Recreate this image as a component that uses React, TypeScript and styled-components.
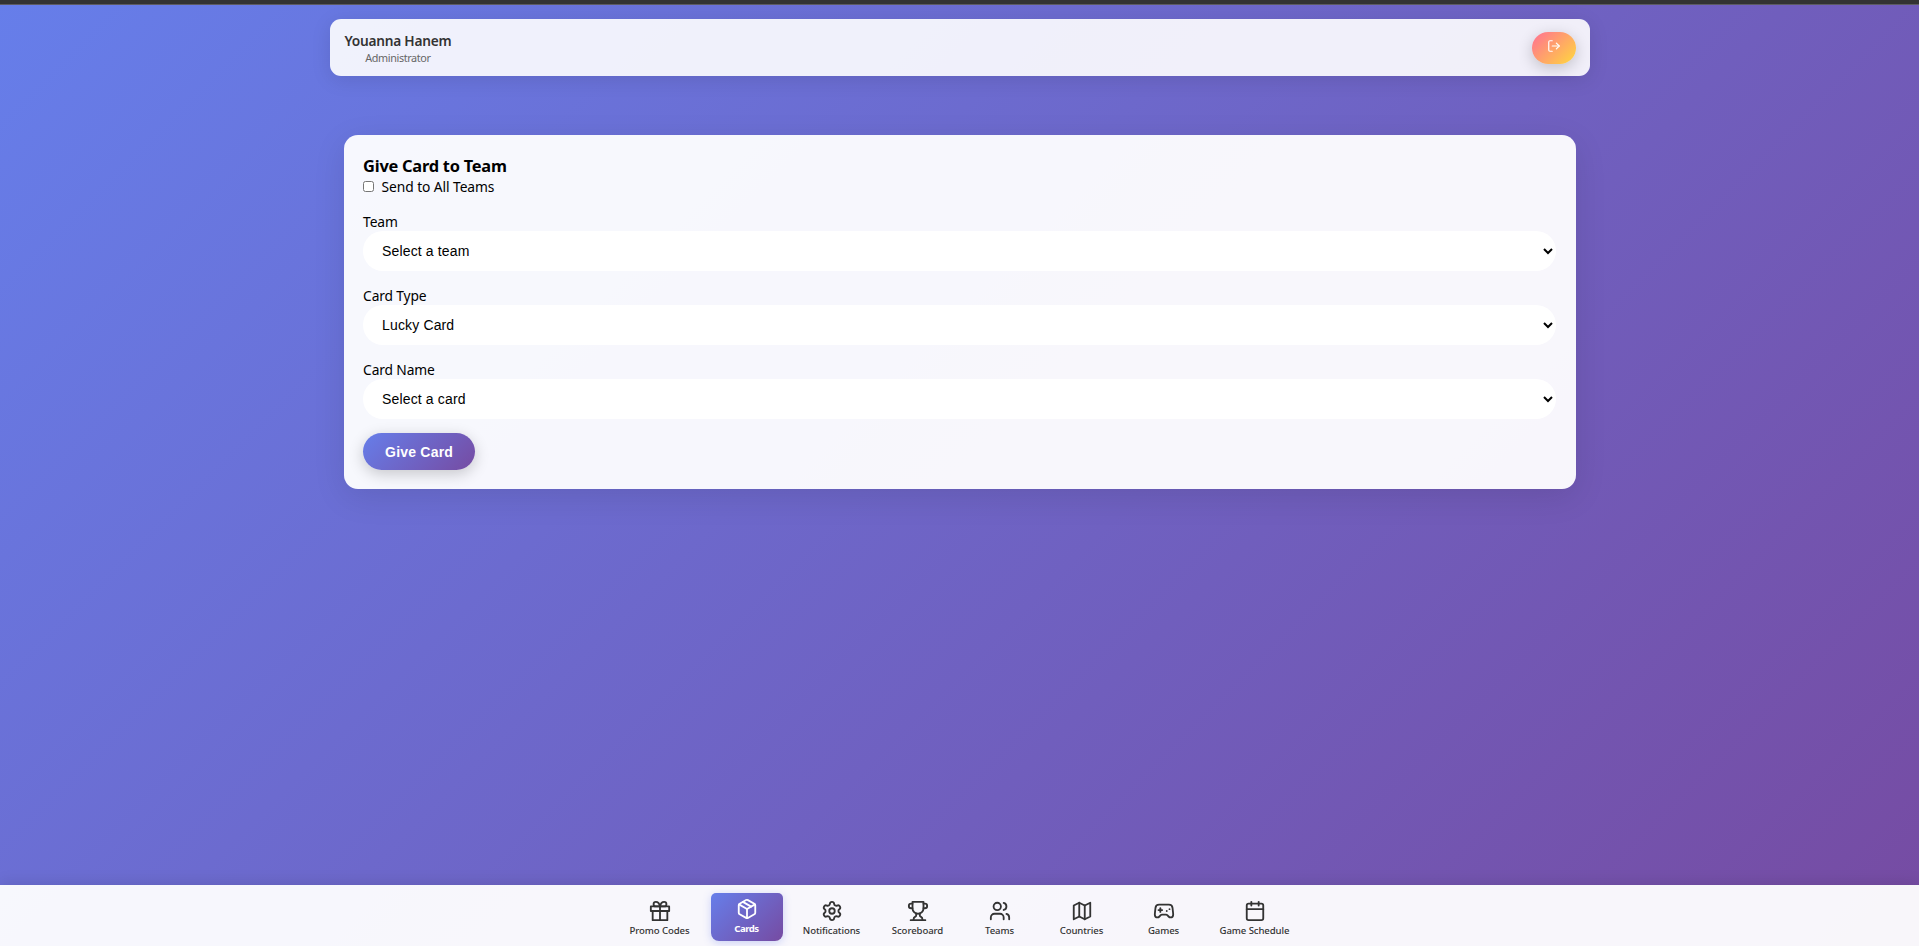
import React from "react";
import styled, { createGlobalStyle, css } from "styled-components";
import { Package, Settings, Users, Gamepad2, Calendar, LogOut } from "lucide-react";
import { FiGift } from "react-icons/fi";

const GlobalStyle = createGlobalStyle`
  * { box-sizing: border-box; margin: 0; padding: 0; }
  body { font-family: "Noto Sans", "Open Sans", sans-serif; font-size: 14px; color: #000; overflow: hidden; }
`;

const Page = styled.div`
  height: 946px;
  display: flex;
  flex-direction: column;
  align-items: center;
  background: linear-gradient(135deg, #667eea 0%, #764ba2 100%);
`;

const TopStrip = styled.div`
  width: 100%;
  height: 5px;
  flex: none;
  background: #333;
  border-bottom: 1px solid #5d5b62;
`;

const Header = styled.header`
  width: 1260px;
  height: 57px;
  margin-top: 14px;
  padding: 0 14px 0 15px;
  flex: none;
  display: flex;
  align-items: center;
  justify-content: space-between;
  border-radius: 11px;
  background: rgba(255, 255, 255, 0.9);
  box-shadow: 0 4px 20px rgba(0, 0, 0, 0.1);
`;

const User = styled.div`
  text-align: center;
`;

const UserName = styled.div`
  font-size: 13.7px;
  font-weight: 600;
  line-height: 19px;
  letter-spacing: -0.24px;
  color: #333;
`;

const UserRole = styled.div`
  font-size: 10.8px;
  line-height: 15px;
  letter-spacing: -0.38px;
  color: #666;
`;

const LogoutButton = styled.button`
  width: 44px;
  height: 32px;
  padding-bottom: 4px;
  display: flex;
  align-items: center;
  justify-content: center;
  border: 0;
  border-radius: 18px;
  color: #fff;
  background: linear-gradient(135deg, #ff6f94, #ffd93d);
  box-shadow: 0 4px 15px rgba(0, 0, 0, 0.2);
`;

const Card = styled.main`
  width: 1232px;
  height: 354px;
  margin-top: 59px;
  padding: 19.6px;
  flex: none;
  border-radius: 14px;
  background: rgba(255, 255, 255, 0.95);
  box-shadow: 0 8px 32px rgba(0, 0, 0, 0.1);
`;

const Title = styled.h3`
  font-size: 16.4px;
  font-weight: 700;
  line-height: 22px;
  letter-spacing: -0.24px;
`;

const CheckLabel = styled.label`
  height: 20px;
  display: flex;
  align-items: center;
  gap: 7.5px;
  font-size: 13.8px;
  letter-spacing: -0.08px;
`;

const Checkbox = styled.input`
  width: 11px;
  height: 11px;
  margin-bottom: 1px;
`;

const Field = styled.div`
  display: flex;
  flex-direction: column;
  margin-top: 15.4px;
`;

const FieldLabel = styled.label`
  height: 19px;
  font-size: 13.8px;
  line-height: 19px;
  letter-spacing: -0.14px;
`;

const Select = styled.select`
  width: 100%;
  height: 39.6px;
  padding: 0 15px;
  border: 0;
  border-radius: 20px;
  background-color: #fff;
  color: #000;
  font-family: "Liberation Sans", Arial, sans-serif;
  font-size: 14px;
  letter-spacing: 0.14px;
`;

const SubmitButton = styled.button`
  width: 112px;
  height: 37px;
  margin-top: 14.6px;
  border: 0;
  border-radius: 18.5px;
  color: #fff;
  font: 700 14px "Liberation Sans", Arial, sans-serif;
  letter-spacing: 0.2px;
  background: linear-gradient(135deg, #667eea, #764ba2);
  box-shadow: 0 4px 15px rgba(0, 0, 0, 0.2);
`;

const Nav = styled.nav`
  width: 100%;
  height: 61px;
  margin-top: auto;
  padding-top: 8px;
  flex: none;
  display: flex;
  justify-content: center;
  gap: 10px;
  background: rgba(255, 255, 255, 0.95);
  box-shadow: 0 -2px 14px rgba(0, 0, 0, 0.1);
`;

const NavItem = styled.button<{ $width: number; $active?: boolean }>`
  width: ${(p) => p.$width}px;
  height: 48px;
  padding-top: 7px;
  display: flex;
  flex-direction: column;
  align-items: center;
  gap: 2px;
  border: 0;
  border-radius: 8px;
  background: none;
  color: #333;
  font: 500 9.6px/13px "Noto Sans", "Open Sans", sans-serif;
  letter-spacing: -0.1px;
  white-space: nowrap;
  svg { flex: none; }
  ${(p) =>
    p.$active &&
    css`
      padding-top: 5px;
      border-radius: 5px 5px 8px 8px;
      color: #fff;
      font-weight: 700;
      letter-spacing: -0.5px;
      background: linear-gradient(135deg, #667eea, #764ba2);
      box-shadow: 0 2px 8px rgba(102, 126, 234, 0.3);
    `}
`;

const StrokeIcon = styled.svg.attrs({ viewBox: "0 0 24 24" })`
  width: 22px;
  height: 22px;
  fill: none;
  stroke: currentColor;
  stroke-width: 2;
  stroke-linecap: round;
  stroke-linejoin: round;
`;

const TrophyIcon = () => (
  <StrokeIcon>
    <path d="M6 9H4.5a2.5 2.5 0 0 1 0-5H6" />
    <path d="M18 9h1.5a2.5 2.5 0 0 0 0-5H18" />
    <path d="M4 22h16" />
    <path d="M10 14.66V17c0 .55-.47.98-.97 1.21C7.85 18.75 7 20.24 7 22" />
    <path d="M14 14.66V17c0 .55.47.98.97 1.21C16.15 18.75 17 20.24 17 22" />
    <path d="M18 2H6v7a6 6 0 0 0 12 0V2Z" />
  </StrokeIcon>
);

const MapIcon = () => (
  <StrokeIcon>
    <polygon points="3 6 9 3 15 6 21 3 21 18 15 21 9 18 3 21" />
    <path d="M9 3v15M15 6v15" />
  </StrokeIcon>
);

const items: { label: string; icon: React.ReactNode; width: number; active?: boolean }[] = [
  { label: "Promo Codes", icon: <FiGift size={22} />, width: 82 },
  { label: "Cards", icon: <Package size={22} />, width: 72, active: true },
  { label: "Notifications", icon: <Settings size={22} />, width: 78 },
  { label: "Scoreboard", icon: <TrophyIcon />, width: 74 },
  { label: "Teams", icon: <Users size={22} />, width: 70 },
  { label: "Countries", icon: <MapIcon />, width: 74 },
  { label: "Games", icon: <Gamepad2 size={22} />, width: 70 },
  { label: "Game Schedule", icon: <Calendar size={22} />, width: 92 },
];

const fields = [
  { label: "Team", value: "Select a team" },
  { label: "Card Type", value: "Lucky Card" },
  { label: "Card Name", value: "Select a card" },
];

export default function App() {
  return (
    <>
      <GlobalStyle />
      <Page>
        <TopStrip />
        <Header>
          <User>
            <UserName>Youanna Hanem</UserName>
            <UserRole>Administrator</UserRole>
          </User>
          <LogoutButton aria-label="Log out">
            <LogOut size={14} />
          </LogoutButton>
        </Header>
        <Card>
          <Title>Give Card to Team</Title>
          <CheckLabel>
            <Checkbox type="checkbox" />
            Send to All Teams
          </CheckLabel>
          {fields.map((f) => (
            <Field key={f.label}>
              <FieldLabel>{f.label}</FieldLabel>
              <Select>
                <option>{f.value}</option>
              </Select>
            </Field>
          ))}
          <SubmitButton>Give Card</SubmitButton>
        </Card>
        <Nav>
          {items.map(({ label, icon, width, active }) => (
            <NavItem key={label} $width={width} $active={active}>
              {icon}
              {label}
            </NavItem>
          ))}
        </Nav>
      </Page>
    </>
  );
}
